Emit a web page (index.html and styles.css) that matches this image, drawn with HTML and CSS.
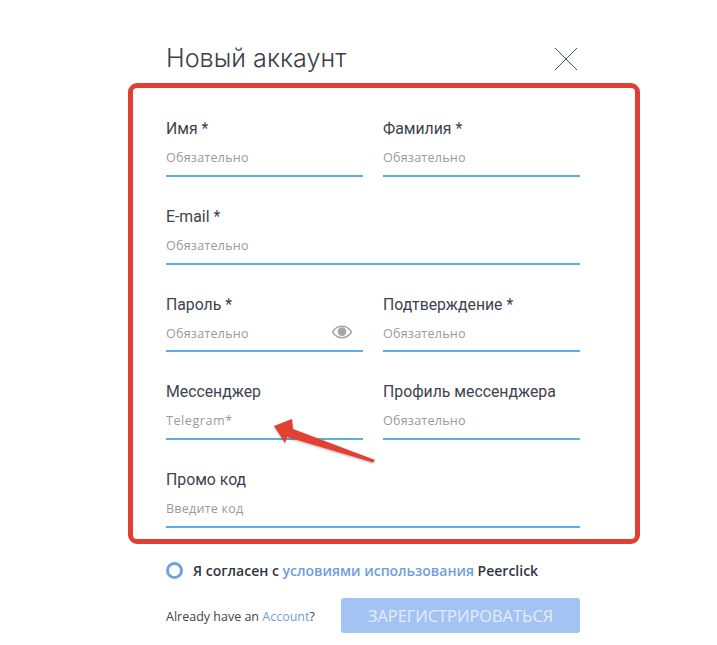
FILE: index.html
```html
<!DOCTYPE html>
<html lang="ru">
<head>
<meta charset="utf-8">
<title>Новый аккаунт</title>
<link rel="stylesheet" href="styles.css">
</head>
<body>
<main class="modal">
  <header class="head">
    <h1 class="title">Новый аккаунт</h1>
    <svg class="close" width="24" height="24" viewBox="0 0 24 24"><path d="M1 1L23 23M23 1L1 23" stroke="#4a4f57" stroke-width="1" fill="none"/></svg>
  </header>
  <form class="grid">
    <div class="field"><div class="label">Имя *</div><div class="input">Обязательно</div></div>
    <div class="field"><div class="label">Фамилия *</div><div class="input">Обязательно</div></div>
    <div class="field wide"><div class="label">E-mail *</div><div class="input">Обязательно</div></div>
    <div class="field"><div class="label">Пароль *</div><div class="input">Обязательно
      <svg class="eye" width="20" height="14" viewBox="0 0 21 14"><path d="M0.5 7C3 3 6.5 1 10.5 1S18 3 20.5 7C18 11 14.5 13 10.5 13S3 11 0.5 7Z" fill="none" stroke="#a6a6a6" stroke-width="1.6"/><circle cx="10.5" cy="6.6" r="4.6" fill="#a6a6a6"/></svg>
    </div></div>
    <div class="field"><div class="label">Подтверждение *</div><div class="input">Обязательно</div></div>
    <div class="field"><div class="label">Мессенджер</div><div class="input latin">Telegram*</div></div>
    <div class="field"><div class="label">Профиль мессенджера</div><div class="input">Обязательно</div></div>
    <div class="field wide"><div class="label">Промо код</div><div class="input">Введите код</div></div>
  </form>
  <div class="agree"><span class="radio"></span><span class="agree-text">Я согласен с <a class="terms">условиями использования</a> Peerclick</span></div>
  <div class="foot">
    <span class="already">Already have an <a class="account">Account</a>?</span>
    <button class="submit" type="button">ЗАРЕГИСТРИРОВАТЬСЯ</button>
  </div>
</main>
<div class="frame"></div>
<svg class="arrow" width="110" height="50" viewBox="0 0 110 50"><defs><filter id="s" x="-10%" y="-20%" width="120%" height="150%"><feDropShadow dx="0" dy="1" stdDeviation="0.8" flood-color="#000" flood-opacity="0.3"/></filter></defs><path d="M4 7L22 0L23 10L105 41L103 43.5L17 18L15 24Z" fill="#e23f33" filter="url(#s)"/></svg>
</body>
</html>
```
FILE: styles.css
```css
* { box-sizing: border-box; }
html, body { margin: 0; padding: 0; background: #fff; }
body { width: 717px; height: 645px; overflow: hidden; position: relative; font-family: "Open Sans", sans-serif; }
.modal { width: 414px; margin-left: 166px; }
.head { display: flex; justify-content: space-between; height: 116px; padding: 0 2px 2px 0; align-items: flex-start; }
.title { margin: 41px 0 0; font: 300 25.2px/34px "Inter", sans-serif; color: #3a4049; }
.close { margin-top: 47px; }
.grid { display: grid; grid-template-columns: 197px 197px; column-gap: 20px; row-gap: 27px; }
.wide { grid-column: 1 / 3; }
.field { height: 60.75px; }
.label { font: 400 15.8px/26px "Roboto", sans-serif; color: #3d434e; height: 25px; }
.input { position: relative; height: 35.75px; border-bottom: 2px solid #5aaee0; font: 400 12.6px/34px "Open Sans", sans-serif; letter-spacing: 0.2px; color: #9a9a9a; }
.latin { letter-spacing: 0.55px; }
.eye { position: absolute; right: 11px; top: 8px; }
.agree { display: flex; align-items: center; gap: 10px; margin-top: 34px; height: 18px; }
.radio { width: 17px; height: 17px; border: 3px solid #6fa3e0; border-radius: 50%; }
.agree-text { font: 600 14px/18px "Open Sans", sans-serif; color: #30353d; }
.terms { color: #6f9edb; }
.foot { display: flex; justify-content: space-between; align-items: center; margin-top: 18px; }
.already { font: 400 12.5px/18px "Open Sans", sans-serif; color: #3f444b; padding-top: 3px; }
.account { color: #6f9edb; }
.submit { width: 239px; height: 35px; border: 0; border-radius: 3px; background: #a3c3f2; color: #e4edfb; font: 400 16.4px/35px "Open Sans", sans-serif; padding: 0; }
.frame { position: absolute; left: 128px; top: 83px; width: 512px; height: 461px; border: 5px solid #e23f33; border-radius: 9px; }
.arrow { position: absolute; left: 270px; top: 419px; }
```
